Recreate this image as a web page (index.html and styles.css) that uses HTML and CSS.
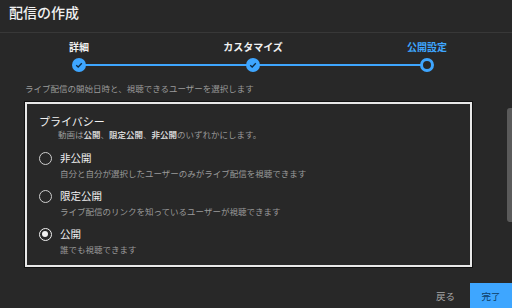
FILE: index.html
```html
<!DOCTYPE html>
<html lang="ja">
<head>
<meta charset="utf-8">
<link rel="stylesheet" href="styles.css">
</head>
<body>
<div class="dialog">
  <header class="header"><h1 class="title">配信の作成</h1></header>
  <div class="stepper">
    <div class="track"></div>
    <div class="step">
      <span class="step-label">詳細</span>
      <span class="dot done"><svg viewBox="0 0 12 12" width="12" height="12"><path d="M3.2 6.2 L5.2 8 L8.8 4.3" fill="none" stroke="#0b2a44" stroke-width="1.3"/></svg></span>
    </div>
    <div class="step">
      <span class="step-label">カスタマイズ</span>
      <span class="dot done"><svg viewBox="0 0 12 12" width="12" height="12"><path d="M3.2 6.2 L5.2 8 L8.8 4.3" fill="none" stroke="#0b2a44" stroke-width="1.3"/></svg></span>
    </div>
    <div class="step">
      <span class="step-label active">公開設定</span>
      <span class="dot current"></span>
    </div>
  </div>
  <p class="subtitle">ライブ配信の開始日時と、視聴できるユーザーを選択します</p>
  <section class="box">
    <h2 class="box-title">プライバシー</h2>
    <p class="box-desc">動画は<b>公開</b>、<b>限定公開</b>、<b>非公開</b>のいずれかにします。</p>
    <div class="options">
      <div class="option">
        <span class="radio"></span>
        <div class="opt-text">
          <div class="opt-label">非公開</div>
          <div class="opt-desc">自分と自分が選択したユーザーのみがライブ配信を視聴できます</div>
        </div>
      </div>
      <div class="option">
        <span class="radio"></span>
        <div class="opt-text">
          <div class="opt-label">限定公開</div>
          <div class="opt-desc">ライブ配信のリンクを知っているユーザーが視聴できます</div>
        </div>
      </div>
      <div class="option">
        <span class="radio checked"></span>
        <div class="opt-text">
          <div class="opt-label">公開</div>
          <div class="opt-desc">誰でも視聴できます</div>
        </div>
      </div>
    </div>
  </section>
  <div class="scrollbar"></div>
  <footer class="footer">
    <span class="back">戻る</span>
    <span class="done-btn">完了</span>
  </footer>
</div>
</body>
</html>
```

FILE: styles.css
```css
* { box-sizing: border-box; margin: 0; padding: 0; }
html, body { width: 512px; height: 308px; overflow: hidden; background: #282828; }
body { font-family: "Noto Sans CJK JP", "Noto Sans", sans-serif; color: #f1f1f1; }
.dialog { position: relative; width: 512px; height: 308px; display: flex; flex-direction: column; background: #282828; }
.header { height: 33px; flex: none; border-bottom: 1px solid #383838; padding-left: 9px; display: flex; align-items: center; }
.title { font-size: 14px; font-weight: 500; line-height: 1; margin-top: -8px; color: #f1f1f1; }
.stepper { position: relative; flex: none; display: flex; justify-content: space-between; padding: 7px 55px 0 49px; height: 49px; }
.track { position: absolute; left: 79px; right: 85px; top: 31px; height: 2px; background: #3ea6ff; }
.step { width: 60px; display: flex; flex-direction: column; align-items: center; position: relative; }
.step-label { font-size: 10px; font-weight: 700; line-height: 14px; color: #f1f1f1; white-space: nowrap; }
.step-label.active { color: #3ea6ff; }
.dot { width: 14px; height: 14px; border-radius: 50%; margin-top: 4px; display: flex; align-items: center; justify-content: center; }
.dot.done { background: #3ea6ff; }
.dot.current { border: 3px solid #3ea6ff; background: #282828; }
.subtitle { flex: none; font-size: 8.5px; color: #9a9a9a; padding-left: 25px; line-height: 12px; height: 12px; margin-bottom: 8px; }
.box { flex: none; margin-left: 25px; width: 447px; height: 165px; border: 2px solid #e8e8e8; box-shadow: 0 0 0 1px #111; padding: 10px 0 0 12px; background: #282828; }
.box-title { font-size: 11px; font-weight: 400; line-height: 14px; color: #f1f1f1; }
.box-desc { font-size: 8.5px; line-height: 12px; color: #9a9a9a; padding-left: 19px; }
.box-desc b { color: #d0d0d0; font-weight: 700; }
.options { display: flex; flex-direction: column; gap: 9px; margin-top: 10px; }
.option { display: flex; align-items: flex-start; height: 29px; }
.radio { width: 13px; height: 13px; border-radius: 50%; border: 1.5px solid #cfcfcf; margin-top: 1.5px; flex: none; position: relative; }
.radio.checked { border-color: #f1f1f1; }
.radio.checked::after { content: ""; position: absolute; left: 2px; top: 2px; width: 6px; height: 6px; border-radius: 50%; background: #f1f1f1; }
.opt-text { margin-left: 8px; }
.opt-label { font-size: 10.5px; line-height: 16px; color: #f1f1f1; }
.opt-desc { font-size: 8.5px; line-height: 12px; color: #9a9a9a; margin-top: 1px; }
.scrollbar { position: absolute; right: 0; top: 108px; width: 5px; height: 114px; background: #5a5a5a; border-radius: 3px 0 0 3px; }
.footer { margin-top: auto; display: flex; justify-content: flex-end; align-items: center; height: 25px; }
.back { font-size: 9.5px; color: #a8a8a8; margin-right: 15px; }
.done-btn { width: 42px; height: 25px; background: #3ea6ff; color: #0d3d66; font-size: 9.5px; display: flex; align-items: center; justify-content: center; }
```
